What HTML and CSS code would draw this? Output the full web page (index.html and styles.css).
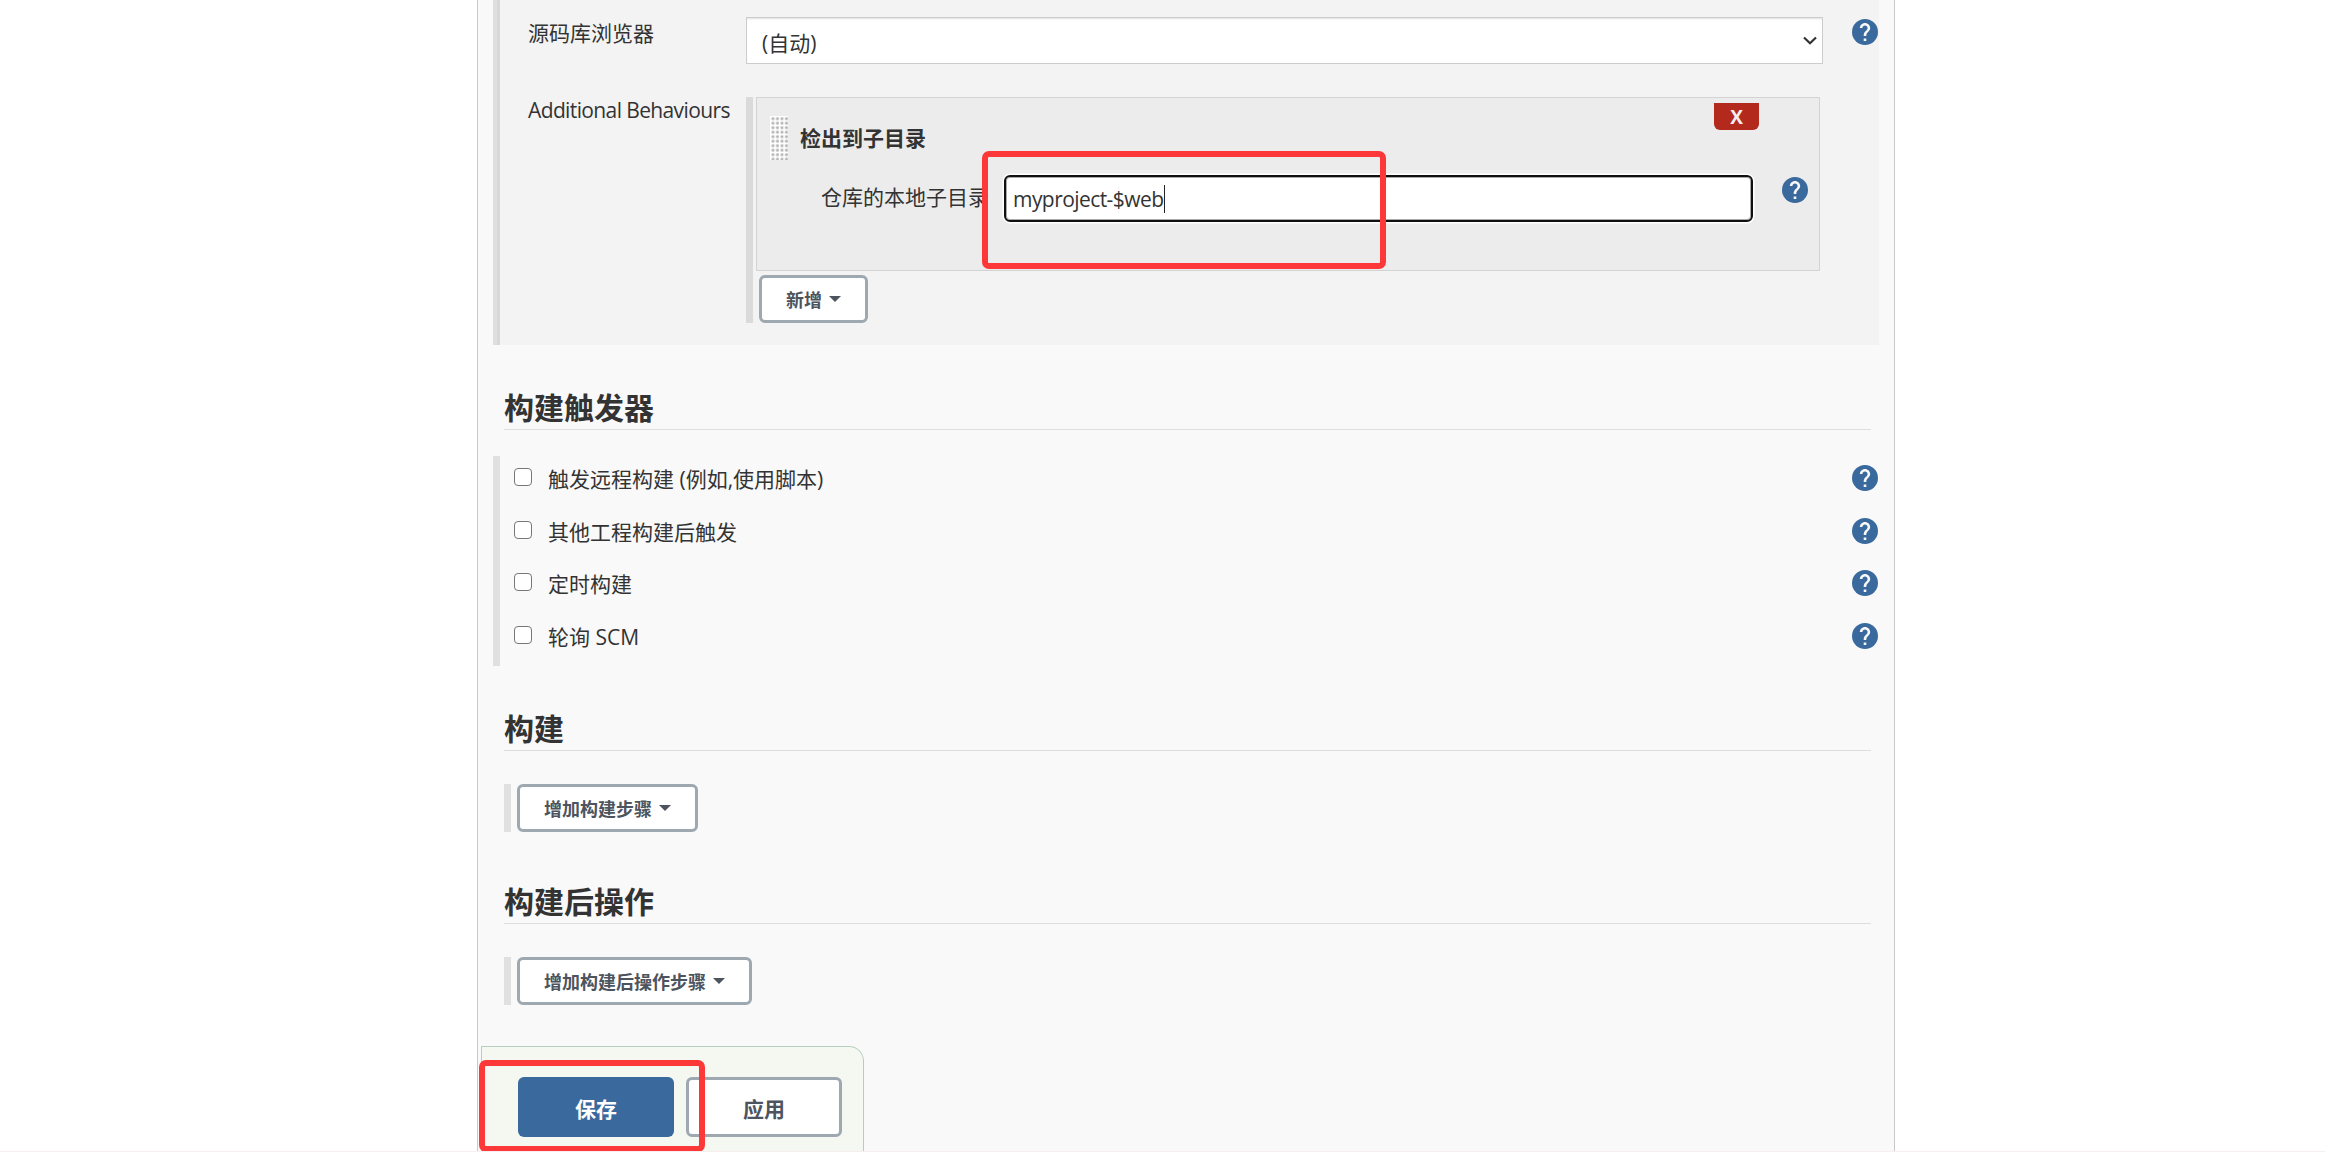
FILE: index.html
```html
<!DOCTYPE html>
<html lang="zh-CN">
<head>
<meta charset="utf-8">
<title>Jenkins</title>
<link rel="stylesheet" href="styles.css">
</head>
<body>
<svg width="0" height="0" class="defs">
  <symbol id="help" viewBox="2 2 20 20">
    <path fill="#3a699d" d="M12 2a10 10 0 1 0 0 20 10 10 0 0 0 0-20z"/>
    <path fill="#f8f8f8" d="M13 19h-2v-2h2v2zm2.070-7.750l-.9.920C13.450 12.900 13 13.500 13 15h-2v-.5c0-1.100.450-2.100 1.170-2.830l1.240-1.260c.370-.360.590-.860.590-1.410 0-1.100-.9-2-2-2s-2 .9-2 2H8c0-2.210 1.790-4 4-4s4 1.790 4 4c0 .880-.360 1.680-.930 2.250z"/>
  </symbol>
  <symbol id="caret" viewBox="0 0 12 6"><path fill="#4d545d" d="M0 0h12L6 6z"/></symbol>
</svg>
<main class="panel">
  <section class="scm">
    <div class="row browser">
      <label class="name">源码库浏览器</label>
      <div class="select"><span>(自动)</span>
        <svg width="14" height="9" viewBox="0 0 14 9"><path d="M1 1.500L7 7.300l6-5.800" fill="none" stroke="#333" stroke-width="2.200"/></svg>
      </div>
      <svg class="help"><use href="#help"/></svg>
    </div>
    <div class="row behaviours">
      <label class="name latin">Additional Behaviours</label>
      <div class="repeat">
        <div class="chunk">
          <div class="grip"></div>
          <h3>检出到子目录</h3>
          <button class="delete">X</button>
          <label class="sub">仓库的本地子目录</label>
          <div class="input"><span>myproject-$web</span><i class="cursor"></i></div>
          <svg class="help"><use href="#help"/></svg>
          <div class="mark mark-input"></div>
        </div>
        <button class="menu">新增<svg class="caret"><use href="#caret"/></svg></button>
      </div>
    </div>
  </section>

  <h2 class="h-trigger">构建触发器</h2>
  <section class="triggers">
    <div class="trigger"><i class="box"></i><label>触发远程构建 (例如,使用脚本)</label><svg class="help"><use href="#help"/></svg></div>
    <div class="trigger"><i class="box"></i><label>其他工程构建后触发</label><svg class="help"><use href="#help"/></svg></div>
    <div class="trigger"><i class="box"></i><label>定时构建</label><svg class="help"><use href="#help"/></svg></div>
    <div class="trigger"><i class="box"></i><label>轮询 SCM</label><svg class="help"><use href="#help"/></svg></div>
  </section>

  <h2 class="h-build">构建</h2>
  <div class="steps"><button class="menu">增加构建步骤<svg class="caret"><use href="#caret"/></svg></button></div>

  <h2 class="h-post">构建后操作</h2>
  <div class="steps"><button class="menu">增加构建后操作步骤<svg class="caret"><use href="#caret"/></svg></button></div>

  <footer class="actions">
    <button class="save">保存</button>
    <button class="apply">应用</button>
    <div class="mark mark-save"></div>
  </footer>
</main>
</body>
</html>
```
FILE: styles.css
```css
* { box-sizing: border-box; }
body {
  margin: 0;
  height: 1152px;
  overflow: hidden;
  background: #fff;
  border-bottom: 1px solid #f7efef;
  color: #333;
  font: 21px/30px "Open Sans", "Noto Sans CJK SC", sans-serif;
}
.defs { display: none; }
button { font-family: inherit; padding: 0; margin: 0; }
h2, h3 { margin: 0; }
.panel {
  width: 1418px;
  height: 1151px;
  margin-left: 477px;
  background: #f9f9f9;
  border: 1px solid #c9c9c9;
  border-width: 0 1px;
  display: flex;
  flex-direction: column;
}
.help { width: 26px; height: 26px; display: block; flex: none; }

.scm {
  height: 345px;
  margin: 0 15px;
  width: 1386px;
  background: linear-gradient(90deg, #dfdfdf 0 4px, #d8d8d8 4px 7px, #f3f3f3 7px);
  padding: 17px 0 0 35px;
}
.row { display: flex; align-items: flex-start; }
.browser { height: 80px; }
.name { width: 218px; flex: none; line-height: 32px; }
.latin { line-height: 26px; white-space: nowrap; letter-spacing: -0.62px; }
.select {
  width: 1077px;
  height: 47px;
  background: #fff;
  border: 1px solid #ccc;
  box-shadow: inset 0 2px 2px -1px #e0e0e0;
  padding: 4px 5px 0 15px;
  display: flex;
  align-items: center;
  justify-content: space-between;
}
.select svg { margin-bottom: 5px; }
.browser .help { margin: 2px 0 0 29px; }
.repeat {
  height: 226px;
  border-left: 7px solid #dadada;
  padding-left: 3px;
}
.chunk {
  width: 1064px;
  height: 174px;
  background: #ececec;
  border: 1px solid #d3d3d3;
  position: relative;
  display: grid;
  grid-template-columns: 30px 21px 183px 709px 44px 1fr;
  grid-template-rows: 76px 1fr;
  padding-left: 13px;
}
.grip {
  width: 18px;
  height: 44px;
  margin-top: 18px;
  background: radial-gradient(circle at 3px 2.700px, #b0b0b0 0.700px, #fff 2.200px) 0 0 / 4.500px 4.500px;
}
h3 { grid-column: 2 / 5; font-size: 21px; line-height: 30px; margin-top: 25px; }
.delete {
  grid-column: 5 / 6;
  width: 45px;
  height: 27px;
  margin: 5px 0 0 1px;
  border: 0;
  border-radius: 0 0 6px 6px;
  background: #b3291c;
  color: #f3eef2;
  font-size: 19px;
  font-weight: 700;
  line-height: 28px;
}
.sub { grid-column: 2 / 4; padding-left: 21px; line-height: 30px; margin-top: 8px; white-space: nowrap; }
.input {
  grid-column: 4 / 6;
  width: 749px;
  height: 47px;
  margin: 1px 0 0;
  background: #fff;
  border: 2px solid #101010;
  border-radius: 6px;
  box-shadow: 0 0 0 1.500px #fff, inset 0 0 0 1px #aaa;
  padding-left: 7px;
  display: flex;
  align-items: center;
}
.input span { letter-spacing: -0.56px; padding-top: 1px; }
.cursor { width: 1px; height: 28px; background: #222; }
.chunk .help { margin: 3px 0 0 25px; }
.mark { position: absolute; border: 6px solid #fc3838; border-radius: 7px; }
.mark-input { left: 225px; top: 53px; width: 404px; height: 118px; }
.menu {
  height: 48px;
  border: 3px solid #9ea8b0;
  border-radius: 6px;
  background: #fff;
  color: #4d545d;
  font-size: 18px;
  font-weight: 700;
  padding: 0 24px;
  display: flex;
  align-items: center;
}
.caret { width: 12px; height: 6px; margin: 0 0 1px 7px; }
.repeat .menu { margin: 4px 0 0 3px; }

h2 {
  margin: 0 23px 0 26px;
  border-bottom: 1px solid #dedede;
  font-size: 30px;
  line-height: 40px;
  height: 42px;
}
.h-trigger { margin-top: 43px; }
.triggers {
  margin: 26px 15px 0;
  height: 210px;
  border-left: 7px solid #e0e0e0;
  padding: 9px 1px 0 14px;
}
.trigger { height: 52.500px; display: flex; align-items: flex-start; }
.trigger .help { margin-left: auto; }
.trigger label { margin-left: 16px; line-height: 28px; }
.box {
  width: 18px;
  height: 18px;
  margin-top: 3px;
  border: 1.500px solid #777;
  border-radius: 4px;
  background: #fff;
}
.h-build { margin-top: 43px; }
.steps {
  margin: 33px 26px 0;
  border-left: 7px solid #e0e0e0;
  padding-left: 6px;
  height: 48px;
  display: flex;
}
.h-post { margin-top: 50px; }

.actions {
  position: relative;
  margin: 41px 0 0 3px;
  width: 383px;
  height: 105px;
  flex: none;
  background: #f5f8f1;
  border: 1px solid #b5cfbf;
  border-bottom: 0;
  border-radius: 0 15px 0 0;
  padding: 30px 0 0 36px;
  display: flex;
  gap: 12px;
}
.save, .apply {
  width: 156px;
  height: 60px;
  border-radius: 6px;
  font-size: 21px;
  font-weight: 700;
  padding-top: 1px;
}
.save { background: #3a699d; border: 0; color: #fff; }
.apply { background: #fff; border: 3px solid #9ea8b0; color: #4d545d; }
.mark-save { left: -3px; top: 13px; width: 226px; height: 92px; }
```
